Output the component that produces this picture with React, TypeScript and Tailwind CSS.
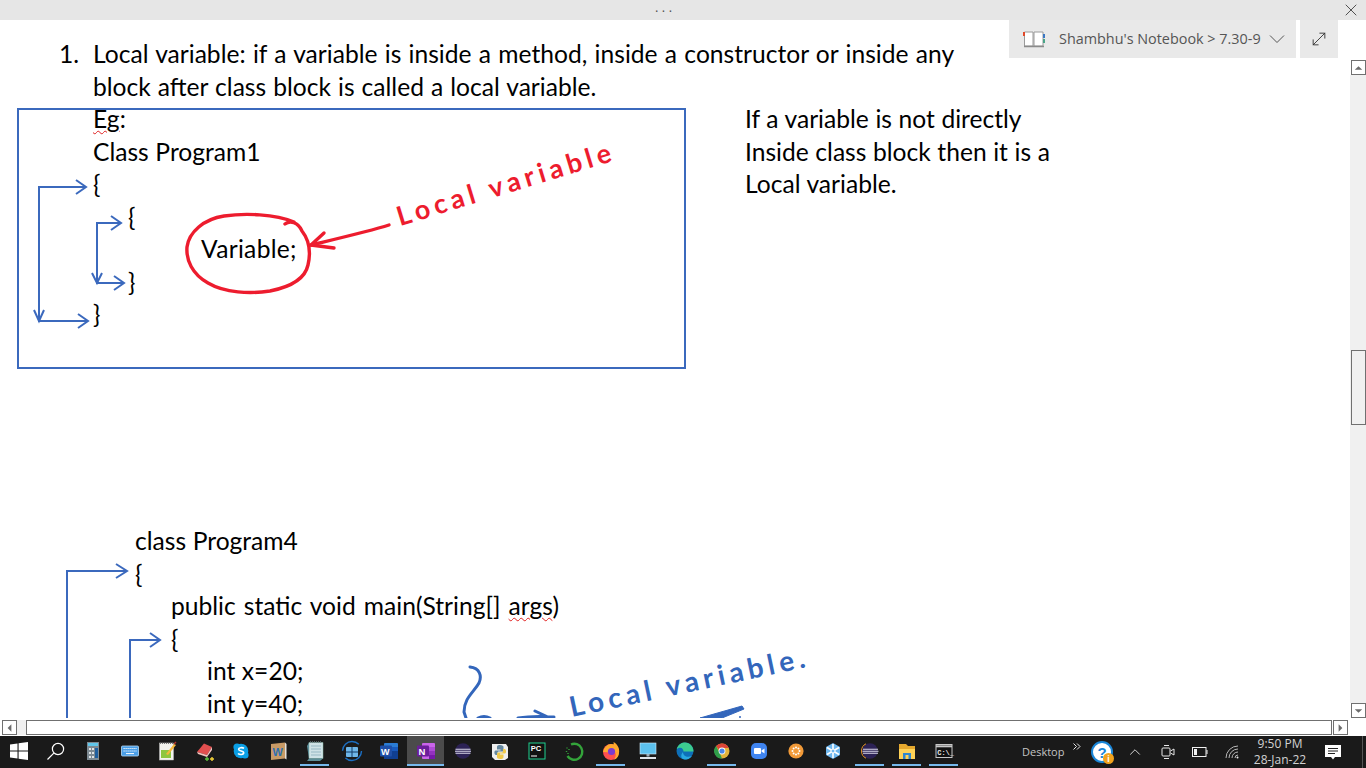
import React from 'react'
import { X, MoveDiagonal, ChevronUp } from 'lucide-react'

const textFont = "font-['Lato',sans-serif]"
const uiFont = "font-['Open_Sans',sans-serif]"

const Line = ({ indent = 0, className = '', children }: { indent?: number; className?: string; children: React.ReactNode }) => (
  <div className={`h-[32.5px] whitespace-pre ${className}`} style={{ paddingLeft: indent }}>
    {children}
  </div>
)

const Squiggle = ({ children }: { children: React.ReactNode }) => (
  <span className="underline decoration-wavy decoration-[#e02020] decoration-1 underline-offset-2">{children}</span>
)

// blue arrows + red ink, in page coordinates (canvas starts at y=20)
const Ink = () => (
  <svg className="absolute left-0 top-0" width="1350" height="698" viewBox="0 20 1350 698" fill="none">
    <g stroke="#3b69bd" strokeWidth="2">
      <path d="M86 187H39V321H88" />
      <path d="M76 180L86 187L76 194" />
      <path d="M34 310L39 321L44 310" />
      <path d="M78 314L88 321L78 328" />
      <path d="M121 223H97V283H124" />
      <path d="M111 216L121 223L111 230" />
      <path d="M92 273L97 283L102 273" />
      <path d="M114 276L124 283L114 290" />
      <path d="M127 571H67V718" />
      <path d="M116 564L127 571L116 578" />
      <path d="M160 640H130V718" />
      <path d="M150 633L160 640L150 647" />
    </g>
    <g stroke="#ed1c2e" strokeWidth="3.4" strokeLinecap="round" strokeLinejoin="round">
      <path d="M285 224C290 220 298 222 302 231C309 240 311 252 308 265C305 279 290 287 270 291C250 294 225 293 208 283C192 274 186 260 187 247C189 232 204 219 224 216C245 213 275 214 294 222" />
      <path d="M389 225C370 231 340 238 311 245" />
      <path d="M324 233L311 245L334 248" />
    </g>
    <g stroke="#3366bb" strokeWidth="3" strokeLinecap="round" strokeLinejoin="round">
      <path d="M470 667C480 668 482 676 479 683C474 692 464 698 464 712L466 718" />
      <path d="M478 718C482 716 486 716 490 718" />
      <path d="M518 718C530 716 540 716 554 717M535 711L550 718" />
    </g>
    <path d="M700 718L742 706L744 709L722 718Z" fill="#3366bb" stroke="#3366bb" strokeWidth="1" />
    <circle cx="740" cy="717" r="1" fill="#3366bb" />
  </svg>
)

const NotebookIcon = () => (
  <svg width="24" height="20" viewBox="0 0 24 20" fill="none">
    <path d="M2.5 3H11V17H2.5ZM12 3H21V17H12Z" fill="#fff" stroke="#9a9a9a" />
    <path d="M2 17.5H22" stroke="#8a8a8a" strokeWidth="1.5" />
    <rect x="1" y="3" width="2" height="4" fill="#e0492a" />
    <rect x="21" y="5" width="2" height="4" fill="#3b78c4" />
    <rect x="21" y="10" width="2" height="4" fill="#4aa488" />
  </svg>
)

const Arrow = ({ dir }: { dir: 'up' | 'down' | 'left' | 'right' }) => {
  const pts = { up: '3,9 11,9 7,5', down: '3,5 11,5 7,9', left: '9,3 9,11 5,7', right: '5,3 5,11 9,7' }[dir]
  return (
    <svg width="14" height="14" viewBox="0 0 14 14">
      <polygon points={pts} fill="#6b6b6b" />
    </svg>
  )
}

const SB = ({ dir }: { dir: 'up' | 'down' | 'left' | 'right' }) => (
  <div className="w-[15px] h-[15px] shrink-0 border border-[#707070] bg-white flex items-center justify-center">
    <Arrow dir={dir} />
  </div>
)

// taskbar glyphs, each drawn on a 24x24 box
const icons: { key: string; active?: boolean; on?: boolean; svg: React.ReactNode }[] = [
  { key: 'win', svg: <path d="M3 5.5L10.5 4.4V11.4H3ZM11.6 4.2L21 3V11.4H11.6ZM3 12.6H10.5V19.6L3 18.5ZM11.6 12.6H21V21L11.6 19.8Z" fill="#fff" /> },
  { key: 'search', svg: <g fill="none" stroke="#fff" strokeWidth="1.2"><circle cx="14" cy="10" r="5.6" /><path d="M9.8 14.2L3.5 20.5" /></g> },
  { key: 'calc', svg: <g><rect x="6" y="3" width="12" height="18" fill="#7d8a93" /><rect x="7" y="4" width="10" height="3" fill="#5fc6ea" /><path d="M8 9h2v2H8zM11 9h2v2h-2zM8 13h2v2H8zM11 13h2v2h-2zM8 17h2v2H8zM11 17h2v2h-2z" fill="#dfe4e7" /><rect x="14" y="9" width="3" height="10" fill="#1f5f9e" /></g> },
  { key: 'kbd', svg: <g><rect x="3.5" y="7" width="17" height="10" rx="1" fill="#4a9fe8" stroke="#b8dcf8" strokeWidth=".8" /><path d="M5.5 9.5h13M5.5 12h13" stroke="#fff" strokeDasharray="1.2 .8" /><path d="M8 14.6h8" stroke="#fff" /></g> },
  { key: 'notes', svg: <g><rect x="4.5" y="4" width="14" height="17" fill="#f3f3ee" stroke="#bbb" strokeWidth=".5" /><path d="M5 4h13" stroke="#555" strokeDasharray="1 1" strokeWidth="1.5" /><path d="M6 11h10v8H6z" fill="#8ec63f" /><path d="M11 15L19 5L21 6L13 16Z" fill="#f6b73c" /><path d="M19 5L21 3" stroke="#b3332a" strokeWidth="1.5" /></g> },
  { key: 'eraser', svg: <g><path d="M5 13L12 4.5L20 8L15 16Z" fill="#e24f4f" /><path d="M5 13L15 16L20 8V11L15 18L6 15Z" fill="#f2c4c0" /><path d="M13 20h4M15 18v4" stroke="#5cc23c" strokeWidth="1.4" /><path d="M18 20h4M20 18v4" stroke="#f5d33a" strokeWidth="1.4" /></g> },
  { key: 'skype', svg: <g><circle cx="12" cy="12" r="7.3" fill="#0a9fe5" /><circle cx="8" cy="8" r="3.6" fill="#0a9fe5" /><circle cx="16" cy="16" r="3.6" fill="#0a9fe5" /><path d="M15 9.4C13.5 8.2 9.6 8.4 9.6 10.3C9.6 12.6 14.7 11.4 14.7 13.8C14.7 15.9 10.6 16 9 14.5" stroke="#fff" strokeWidth="1.6" fill="none" /></g> },
  { key: 'wbook', svg: <g><path d="M5 5L19 3.5V19.5L5 21Z" fill="#c89a66" /><path d="M19 3.5L20.5 5V20.5L19 19.5Z" fill="#e5e1dc" /><text x="6.5" y="16.5" fontSize="11" fontWeight="700" fill="#2f6fb1" fontFamily="Liberation Sans">W</text></g> },
  { key: 'notebook', on: true, svg: <g><path d="M6 3.5H20V19.5H6Z" fill="#cfe2e6" stroke="#8ba" strokeWidth=".5" /><path d="M4 7L6 3.5V19.5L4 22H17L20 19.5H6Z" fill="#5d8f99" /><path d="M7 3h12" stroke="#6a7a80" strokeDasharray="1 1" strokeWidth="1.5" /><path d="M8 7h10M8 10h10M8 13h10M8 16h10" stroke="#7fa8b4" strokeWidth=".7" /></g> },
  { key: 'cal', svg: <g fill="none"><circle cx="12" cy="12" r="9.5" stroke="#1b6fc4" strokeWidth="1.4" strokeDasharray="22 8" /><rect x="6" y="8" width="12" height="10" rx="1" fill="#6fb6e8" /><path d="M6 13h12M12 8v10" stroke="#123a66" strokeWidth="1" /></g> },
  { key: 'word', svg: <g><rect x="7" y="4" width="14" height="16" rx="1" fill="#2b7cd3" /><rect x="7" y="8" width="14" height="4" fill="#185abd" /><rect x="7" y="12" width="14" height="8" fill="#103f91" /><rect x="3" y="6.5" width="12" height="11" rx="1" fill="#1e4fa8" /><text x="4" y="15.6" fontSize="9" fontWeight="700" fill="#fff" fontFamily="Liberation Sans">W</text></g> },
  { key: 'onenote', active: true, on: true, svg: <g><rect x="8" y="4" width="13" height="16" rx="1" fill="#ca64ea" /><rect x="15" y="8" width="6" height="4" fill="#ae4bd5" /><rect x="15" y="12" width="6" height="4" fill="#9332bf" /><rect x="15" y="16" width="6" height="4" fill="#7719aa" /><rect x="3" y="6.5" width="12" height="11" rx="1" fill="#6c1d9a" /><text x="4.6" y="15.8" fontSize="9.5" fontWeight="700" fill="#fff" fontFamily="Liberation Sans">N</text></g> },
  { key: 'eclipse1', svg: <g><circle cx="12" cy="12" r="7.8" fill="#2c2255" /><path d="M4.5 10.2h15M4 12.2h16M4.5 14.2h15" stroke="#d8d6e8" strokeWidth="1.1" /></g> },
  { key: 'python', svg: <g><path d="M4 5H18L20 8V19L17 21H7L4 18Z" fill="#efefef" /><path d="M12 6C9 6 9 7 9 9V10.5H12.5V11.5H7.5C6 11.5 6 16 8 16H9.5V14C9.5 13 10 12.5 11 12.5H14C15 12.5 15.5 12 15.5 11V8C15.5 7 14.5 6 12 6Z" fill="#64879e" /><path d="M12.5 20C15.5 20 15.5 19 15.5 17V15.5H12V14.5H17C18.5 14.5 18.5 10 16.5 10H15V12C15 13 14.5 13.5 13.5 13.5H10.5C9.5 13.5 9 14 9 15V18C9 19 10 20 12.5 20Z" fill="#f0c94a" /></g> },
  { key: 'pycharm', svg: <g><rect x="4" y="4" width="16" height="16" fill="#111" stroke="#1fd18f" strokeWidth="1" /><text x="5.8" y="12.4" fontSize="7.6" fontWeight="700" fill="#fff" fontFamily="Liberation Sans">PC</text><path d="M6 17h6" stroke="#fff" strokeWidth="1" /></g> },
  { key: 'spinner', svg: <g fill="none"><path d="M9 5.5A8 8 0 1 1 5.5 17" stroke="#33a33a" strokeWidth="2.4" /><path d="M5 8.5v1M4.5 12v1M7 10v1M6 14v1" stroke="#33a33a" strokeWidth="1.4" /></g> },
  { key: 'firefox', on: true, svg: <g><circle cx="12" cy="13" r="8" fill="#ff4f4f" /><path d="M4 13C5 8 9 5 12 5C17 5 20 9 20 13C20 17 18 20 15 20.5C18 17 17 12 13 10C15 8 15 6 14.5 3C18 5 21 9 20 14" fill="#ffa92d" /><circle cx="12.5" cy="12.5" r="3.6" fill="#7b3bd1" /></g> },
  { key: 'monitor', svg: <g><rect x="4" y="4" width="16" height="11" fill="#5cc1ee" stroke="#cfeafa" strokeWidth=".6" /><rect x="10.5" y="15" width="3" height="2.5" fill="#9fb1bd" /><path d="M4 19h16" stroke="#dde3e8" strokeWidth="2" /></g> },
  { key: 'edge', svg: <g><circle cx="12" cy="12" r="8.5" fill="#0d6fb8" /><path d="M3.8 10C5 5 9 3.5 12 3.5C17 3.5 20.5 7.5 20.5 12.5H10.5C10.5 10 8 7 3.8 10Z" fill="#3ccb8f" /><path d="M10 13C10 17 14 19 19 17C17 20 14 20.5 12 20.5C8 20.5 7 16 10 13Z" fill="#27a8e0" /></g> },
  { key: 'chrome', on: true, svg: <g><circle cx="12" cy="12" r="7.5" fill="#e2b33b" /><path d="M12 4.5A7.5 7.5 0 0 1 18.7 9H12A3 3 0 0 0 9 11L6 7A7.5 7.5 0 0 1 12 4.5Z" fill="#dc4437" /><path d="M6 7L9.5 13.5L12 19.5A7.5 7.5 0 0 1 6 7Z" fill="#2f9e4a" /><circle cx="12" cy="12" r="3.4" fill="#fff" /><circle cx="12" cy="12" r="2.6" fill="#4a86e8" /></g> },
  { key: 'zoom', svg: <g><rect x="4" y="4" width="16" height="16" rx="5" fill="#3f84f0" /><rect x="7" y="9" width="7" height="6" rx="1" fill="#fff" /><path d="M14.5 11.5L17.5 9.5V14.5L14.5 12.5Z" fill="#fff" /></g> },
  { key: 'orange', svg: <g><circle cx="12" cy="12" r="7.6" fill="#f29a38" /><g fill="#fff"><circle cx="12" cy="8.5" r="1" /><circle cx="12" cy="15.5" r="1" /><circle cx="8.5" cy="12" r="1" /><circle cx="15.5" cy="12" r="1" /><circle cx="9.6" cy="9.6" r="1" /><circle cx="14.4" cy="9.6" r="1" /><circle cx="9.6" cy="14.4" r="1" /><circle cx="14.4" cy="14.4" r="1" /></g></g> },
  { key: 'snow', svg: <g><path d="M12 4L19 8V16L12 20L5 16V8Z" fill="#6fb7ee" /><g stroke="#fff" strokeWidth="1.6"><path d="M12 5V19M6 8.5L18 15.5M18 8.5L6 15.5" /></g><circle cx="12" cy="12" r="2" fill="#6fb7ee" stroke="#fff" /></g> },
  { key: 'eclipse2', on: true, svg: <g><circle cx="12" cy="12" r="7.8" fill="#2c2255" /><path d="M8 4.8A8 8 0 0 0 8 19.2" stroke="#e5932c" fill="none" /><path d="M5 10.2h15M4.5 12.2h16M5 14.2h15" stroke="#d8d6e8" strokeWidth="1.1" /></g> },
  { key: 'folder', on: true, svg: <g><path d="M4 5H11L13 7H20V20H4Z" fill="#e5a82e" /><path d="M4 10H20V20H4Z" fill="#ffd257" /><rect x="8" y="14" width="8" height="6" fill="#2f87d0" /><rect x="10.5" y="16" width="3" height="4" fill="#ffd257" /></g> },
  { key: 'cmd', on: true, svg: <g><rect x="4" y="5.5" width="16" height="13" fill="#111" stroke="#c8c8c8" /><path d="M4 7.3h16" stroke="#c8c8c8" strokeWidth="2" /><text x="5.2" y="15.8" fontSize="7" fontWeight="700" fill="#eee" fontFamily="Liberation Mono">C:\_</text></g> },
]

const Taskbar = () => (
  <div className={`h-8 bg-[#1a1a1a] flex items-stretch shrink-0 ${uiFont}`}>
    {icons.map((i) => (
      <div key={i.key} className={`relative w-[37px] mb-[2px] flex items-center justify-center ${i.active ? 'bg-[#4b4b4b]' : ''}`}>
        <svg width="24" height="24" viewBox="0 0 24 24">{i.svg}</svg>
        {i.on ? <div className={`absolute bottom-0 h-[2px] bg-[#76b9ed] ${i.active ? 'inset-x-0' : 'inset-x-1'}`} /> : null}
      </div>
    ))}
    <div className="flex-1" />
    <div className="flex items-center text-[#cfcfcf]">
      <span className="text-[11px] text-[#c4c4c4] w-[45px] mr-[6px]">Desktop</span>
      <svg className="mb-[12px] mr-[10px]" width="8" height="7" viewBox="0 0 8 7" fill="none" stroke="#e8e8e8"><path d="M.5 .5L3.5 3.5L.5 6.5M4 .5L7 3.5L4 6.5" /></svg>
      <div className="relative w-[22px] h-[22px] rounded-full bg-white border-[2px] border-[#1a86d8] flex items-center justify-center mr-[13px]">
        <span className="text-[#1a86d8] text-[15px] font-bold leading-none font-['Liberation_Sans',sans-serif]">?</span>
        <span className="absolute -right-[3px] -bottom-[3px] w-[11px] h-[11px] rounded-full bg-[#f2a31d] text-white text-[8px] leading-[11px] text-center font-bold">i</span>
      </div>
      <ChevronUp size={18} strokeWidth={1.2} color="#e8e8e8" className="mr-[17px]" />
      <svg className="mr-[17px]" width="14" height="18" viewBox="0 0 14 18" fill="none" stroke="#e8e8e8"><rect x="1" y="5" width="8" height="8" rx="1" /><path d="M9.5 8L13 6V12L9.5 10M3 2.5H8M3 15.5H8" /></svg>
      <svg className="mr-[17px]" width="16" height="10" viewBox="0 0 16 10" fill="none" stroke="#f0f0f0"><rect x=".5" y=".5" width="13.5" height="9" /><rect x="2" y="2" width="3" height="6" fill="#f0f0f0" stroke="none" /><path d="M15 3V7" /></svg>
      <svg className="mr-[10px]" width="16" height="14" viewBox="0 0 16 14" fill="none" stroke="#b8b8b8"><path d="M1 13A12 12 0 0 1 13 1M4 13A9 9 0 0 1 13 4M7 13A6 6 0 0 1 13 7M10 13A3 3 0 0 1 13 10" /><circle cx="12.5" cy="12.5" r="1" fill="#eee" stroke="none" /></svg>
      <div className="w-[58px] flex flex-col items-center text-[12px] leading-[16px] text-[#d2d2d2] mr-[10px]">
        <span>9:50 PM</span>
        <span>28-Jan-22</span>
      </div>
      <div className="w-[28px] flex justify-center mr-[15px]">
        <svg width="18" height="18" viewBox="0 0 18 18"><path d="M1 2H17V14H11L9 16.5L7 14H1Z" fill="#fff" /><path d="M4 5.5H14M4 8H14M4 10.5H11" stroke="#222" /></svg>
      </div>
      <div className="w-[4px] h-full border-l border-[#555]" />
    </div>
  </div>
)

export default function App() {
  return (
    <div className="w-[1366px] h-[768px] overflow-hidden flex flex-col bg-white">
      <div className="relative h-5 bg-[#e6e6e6] shrink-0 flex items-center justify-center pr-[36px]">
        <span className="text-[#555] text-[14px] leading-none tracking-[3px] -mt-[6px] font-['Liberation_Sans',sans-serif]">...</span>
        <X size={20} strokeWidth={1} color="#333" className="absolute right-[5px] top-0" />
      </div>

      <div className="flex-1 flex min-h-0">
        <div className={`relative w-[1350px] text-[24.6px] leading-[32.5px] [word-spacing:0.3px] text-black ${textFont}`}>
          <Ink />

          <div className="absolute left-[59px] top-[18px] flex">
            <div className="w-[34px]">1.</div>
            <div>
              <Line className="[word-spacing:1px]">Local variable: if a variable is inside a method, inside a constructor or inside any</Line>
              <Line className="[word-spacing:0.75px]">block after class block is called a local variable.</Line>
              <Line><Squiggle>Eg</Squiggle>:</Line>
              <Line>Class Program1</Line>
              <Line>{'{'}</Line>
              <Line indent={35}>{'{'}</Line>
              <Line indent={108} className="tracking-[0.3px]">Variable;</Line>
              <Line indent={35}>{'}'}</Line>
              <Line>{'}'}</Line>
            </div>
          </div>

          <div className="absolute left-[17px] top-[88px] w-[669px] h-[261px] border-2 border-[#3b69bd]" />

          <div className="absolute left-[745px] top-[83px]">
            <Line>If a variable is not directly</Line>
            <Line>Inside class block then it is a</Line>
            <Line>Local variable.</Line>
          </div>

          <div className="absolute left-[135px] top-[505px]">
            <Line>class Program4</Line>
            <Line>{'{'}</Line>
            <Line indent={36} className="[word-spacing:1.8px]">public static void main(String[] <Squiggle>args</Squiggle>)</Line>
            <Line indent={36}>{'{'}</Line>
            <Line indent={72}>int x=20;</Line>
            <Line indent={72}>int y=40;</Line>
          </div>

          {/* handwritten notes */}
          <div className="absolute left-[401px] top-[182px] origin-bottom-left -rotate-[17deg] text-[#ed1c2e] text-[27px] font-bold tracking-[4.6px] [word-spacing:0px] leading-none whitespace-pre font-['Lato',sans-serif]">
            Local variable
          </div>
          <div className="absolute left-[572px] top-[674px] origin-bottom-left -rotate-[12deg] text-[#3366bb] text-[28px] font-bold tracking-[4.6px] [word-spacing:0px] leading-[24px] whitespace-pre font-['Lato',sans-serif]">
            Local variable.
          </div>

          <div className={`absolute left-[1009px] top-0 h-[38px] flex gap-1 tracking-normal [word-spacing:0px] ${uiFont}`}>
            <div className="w-[287px] h-full bg-[#e9e9e9] flex items-center pl-[13px] text-[#555] text-[14.4px]">
              <NotebookIcon />
              <span className="ml-[13px] w-[210px] whitespace-pre pt-[1px]">Shambhu's Notebook &gt; 7.30-9</span>
              <svg width="16" height="10" viewBox="0 0 16 10" fill="none" stroke="#555"><path d="M1 1.5L8 8.5L15 1.5" /></svg>
            </div>
            <div className="w-[38px] h-full bg-[#e9e9e9] flex items-center justify-center">
              <MoveDiagonal size={20} strokeWidth={1.1} color="#333" />
            </div>
          </div>
        </div>

        <div className="w-4 flex flex-col items-center bg-white">
          <div className="h-[40px] w-full shrink-0" />
          <SB dir="up" />
          <div className="flex-1 w-full relative bg-[#f0f0f0]">
            <div className="absolute left-[1px] top-[275px] w-[15px] h-[75px] border border-[#707070] bg-[#f0f0f0]" />
          </div>
          <SB dir="down" />
          <div className="h-[1px] w-full shrink-0" />
        </div>
      </div>

      <div className="h-[17px] bg-white shrink-0 flex items-start pl-[2px] pt-[1px]">
        <SB dir="left" />
        <div className="w-[9px] h-[15px] bg-[#f0f0f0]" />
        <div className="w-[1306px] h-[15px] border border-[#707070] bg-white" />
        <div className="w-[1px]" />
        <SB dir="right" />
      </div>

      <Taskbar />
    </div>
  )
}
